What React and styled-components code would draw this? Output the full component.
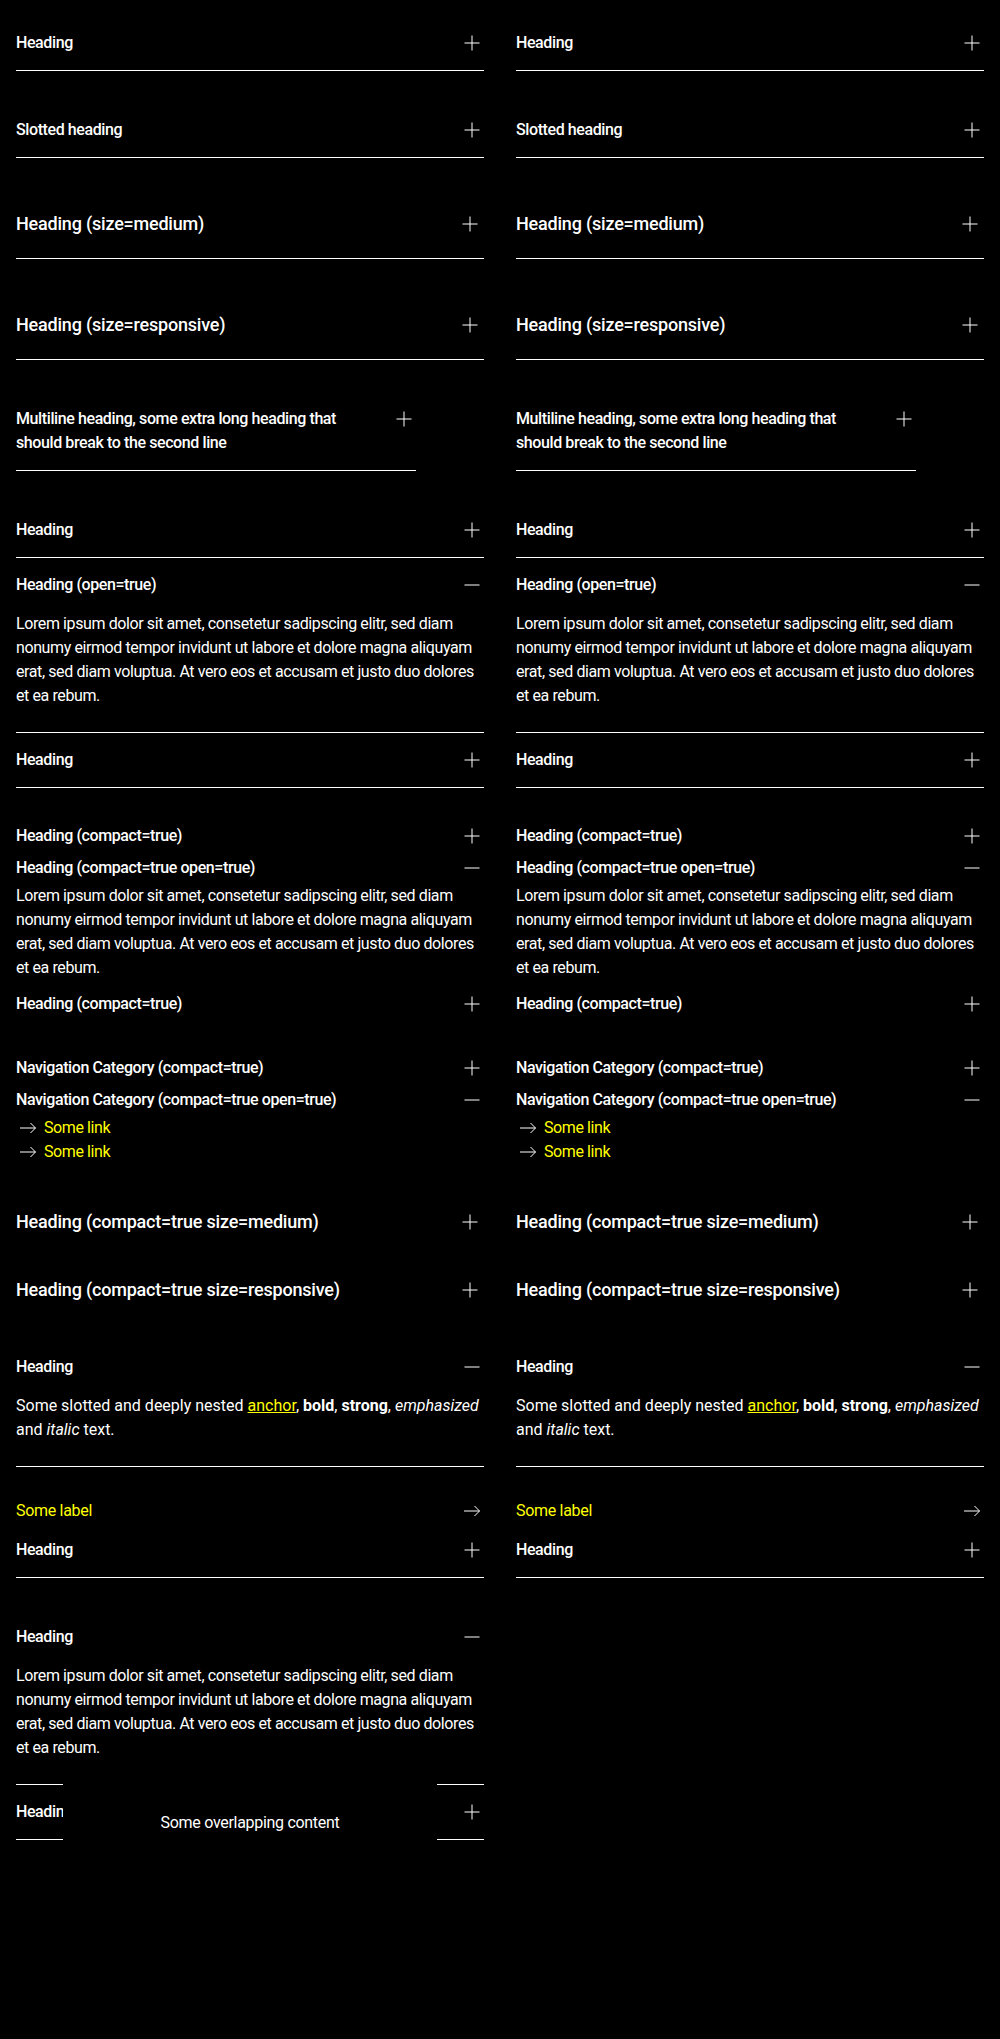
import React from "react";
import styled, { createGlobalStyle } from "styled-components";

const GlobalStyle = createGlobalStyle`
  html, body {
    margin: 0;
    padding: 0;
    background: #000;
  }
  body {
    font-family: Roboto, "Liberation Sans", Arial, sans-serif;
    color: #fff;
  }
`;

const Page = styled.div`
  display: grid;
  grid-template-columns: 1fr 1fr;
  column-gap: 32px;
  align-items: start;
  padding: 16px;
  min-height: 2039px;
  box-sizing: border-box;
  background: #000;
`;

const Column = styled.div`
  display: flex;
  flex-direction: column;
  gap: 32px;
  min-width: 0;
`;

const Group = styled.div`
  display: flex;
  flex-direction: column;
`;

const Item = styled.div`
  position: relative;
  max-width: ${(p) => (p.$maxWidth ? `${p.$maxWidth}px` : "none")};
  border-bottom: ${(p) => (p.$compact ? "none" : "1px solid #fff")};
`;

const Header = styled.div`
  display: flex;
  justify-content: space-between;
  align-items: flex-start;
  gap: 24px;
  padding: ${(p) =>
    p.$compact ? "4px 0" : p.$size === "medium" ? "20px 0" : "15px 0"};
  font-size: ${(p) => (p.$size === "medium" ? "18px" : "16px")};
  line-height: ${(p) => (p.$size === "medium" ? "28px" : "24px")};
  font-weight: 500;
  letter-spacing: ${(p) => (p.$size === "medium" ? "-0.2px" : "-0.4px")};
`;

const IconBox = styled.span`
  flex-shrink: 0;
  width: 24px;
  height: ${(p) => (p.$size === "medium" ? "28px" : "24px")};
  margin-right: ${(p) => (p.$size === "medium" ? "2px" : "0")};
  display: flex;
  align-items: center;
  justify-content: center;
  color: #fff;
`;

const Content = styled.div`
  padding-bottom: ${(p) => (p.$compact ? "8px" : "24px")};
  font-size: 16px;
  line-height: 24px;
  font-weight: 400;
  letter-spacing: -0.4px;
`;

const RichText = styled.span`
  letter-spacing: 0;

  a {
    color: yellow;
    text-decoration: underline;
  }
  b,
  strong {
    font-weight: 700;
  }
  em,
  i {
    font-style: italic;
  }
`;

const LinkRow = styled.a`
  display: flex;
  align-items: center;
  gap: 4px;
  color: yellow;
  text-decoration: none;
  font-size: 16px;
  line-height: 24px;

  svg {
    color: #fff;
  }
`;

const LabelRow = styled.a`
  display: flex;
  justify-content: space-between;
  align-items: center;
  height: 24px;
  color: yellow;
  text-decoration: none;
  font-size: 16px;
  line-height: 24px;
  letter-spacing: -0.3px;

  svg {
    color: #fff;
  }
`;

const Overlay = styled.div`
  position: absolute;
  top: -2px;
  left: 10%;
  right: 10%;
  height: 60px;
  padding-bottom: 8px;
  box-sizing: border-box;
  background: #000;
  display: flex;
  align-items: flex-end;
  justify-content: center;
  font-size: 16px;
  line-height: 24px;
  letter-spacing: -0.3px;
`;

const PlusIcon = () => (
  <svg width="24" height="24" viewBox="0 0 24 24" fill="none">
    <path d="M4.5 12h15M12 4.5v15" stroke="currentColor" strokeWidth="1" />
  </svg>
);

const MinusIcon = () => (
  <svg width="24" height="24" viewBox="0 0 24 24" fill="none">
    <path d="M4.5 12h15" stroke="currentColor" strokeWidth="1" />
  </svg>
);

const ArrowIcon = () => (
  <svg width="24" height="24" viewBox="0 0 24 24" fill="none">
    <path
      d="M4 12h15.5M14.5 7l5 5-5 5"
      stroke="currentColor"
      strokeWidth="1"
    />
  </svg>
);

const Accordion = ({ heading, size, compact, open, maxWidth, children, overlay }) => (
  <Item $compact={compact} $maxWidth={maxWidth}>
    <Header $compact={compact} $size={size}>
      <span>{heading}</span>
      <IconBox $size={size}>{open ? <MinusIcon /> : <PlusIcon />}</IconBox>
    </Header>
    {open && <Content $compact={compact}>{children}</Content>}
    {overlay}
  </Item>
);

const LOREM =
  "Lorem ipsum dolor sit amet, consetetur sadipscing elitr, sed diam nonumy eirmod tempor invidunt ut labore et dolore magna aliquyam erat, sed diam voluptua. At vero eos et accusam et justo duo dolores et ea rebum.";

const Links = () => (
  <>
    <LinkRow href="#">
      <ArrowIcon />
      Some link
    </LinkRow>
    <LinkRow href="#">
      <ArrowIcon />
      Some link
    </LinkRow>
  </>
);

const Showcase = ({ withOverlap }) => (
  <Column>
    <Accordion heading="Heading" />
    <Accordion heading="Slotted heading" />
    <Accordion heading="Heading (size=medium)" size="medium" />
    <Accordion heading="Heading (size=responsive)" size="medium" />
    <Accordion
      heading="Multiline heading, some extra long heading that should break to the second line"
      maxWidth={400}
    />
    <Group>
      <Accordion heading="Heading" />
      <Accordion heading="Heading (open=true)" open>
        {LOREM}
      </Accordion>
      <Accordion heading="Heading" />
    </Group>
    <Group>
      <Accordion heading="Heading (compact=true)" compact />
      <Accordion heading="Heading (compact=true open=true)" compact open>
        {LOREM}
      </Accordion>
      <Accordion heading="Heading (compact=true)" compact />
    </Group>
    <Group>
      <Accordion heading="Navigation Category (compact=true)" compact />
      <Accordion heading="Navigation Category (compact=true open=true)" compact open>
        <Links />
      </Accordion>
    </Group>
    <Accordion heading="Heading (compact=true size=medium)" compact size="medium" />
    <Accordion heading="Heading (compact=true size=responsive)" compact size="medium" />
    <Accordion heading="Heading" open>
      <RichText>
        Some slotted and deeply nested <a href="#">anchor</a>, <b>bold</b>,{" "}
        <strong>strong</strong>, <em>emphasized</em> and <i>italic</i> text.
      </RichText>
    </Accordion>
    <Group>
      <LabelRow href="#">
        Some label
        <ArrowIcon />
      </LabelRow>
      <Accordion heading="Heading" />
    </Group>
    {withOverlap && (
      <Group>
        <Accordion heading="Heading" open>
          {LOREM}
        </Accordion>
        <Accordion
          heading="Heading"
          overlay={<Overlay>Some overlapping content</Overlay>}
        />
      </Group>
    )}
  </Column>
);

export default function App() {
  return (
    <>
      <GlobalStyle />
      <Page>
        <Showcase withOverlap />
        <Showcase />
      </Page>
    </>
  );
}
